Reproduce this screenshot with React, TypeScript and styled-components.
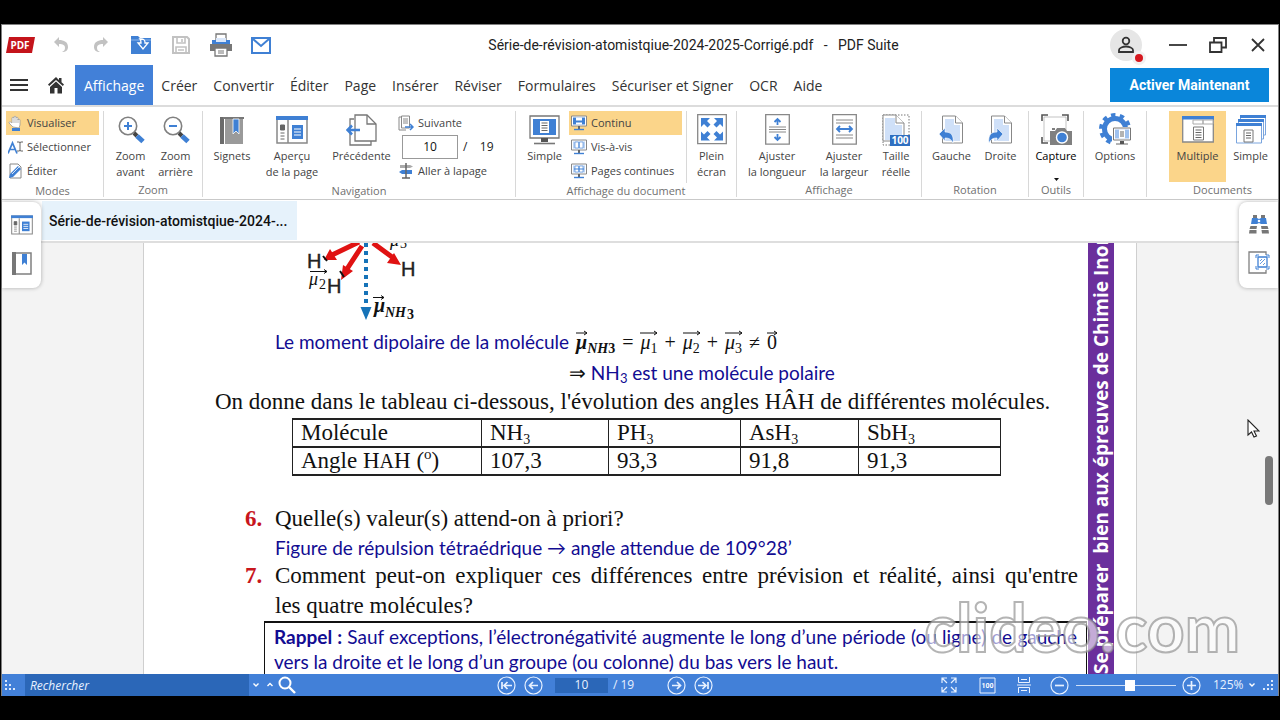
import React from "react";
import styled, { createGlobalStyle, css } from "styled-components";

const BLUE = "#4280d8";
const ICON = "#3f80d4";
const GREY = "#777";
const PALE = "#cfe0f8";
const INK = "#120c92";

const Global = createGlobalStyle`
  * { box-sizing: border-box; }
  body { margin: 0; background: #000; }
  button, input, select { font: inherit; color: inherit; }
  button { background: none; border: 0; padding: 0; cursor: pointer; }
  svg { display: block; flex: none; }
`;

const Screen = styled.div`
  height: 100vh;
  padding: 24px 1px;
  background: #000;
  display: flex;
  flex-direction: column;
  font-family: "Open Sans", "Noto Sans", sans-serif;
`;

const Window = styled.div`
  position: relative;
  flex: 1;
  min-height: 0;
  display: flex;
  flex-direction: column;
  background: #fff;
  border: 1px solid #808080;
  border-bottom: 0;
`;

/* ---------- title bar ---------- */

const TitleBar = styled.header`
  height: 40px;
  flex: none;
  display: flex;
  align-items: center;
  padding: 0 0 0 4px;
`;

const QuickTools = styled.div`
  display: flex;
  align-items: center;
`;

const QuickButton = styled.button`
  width: 40px;
  height: 32px;
  display: flex;
  align-items: center;
  justify-content: center;
`;

const Logo = styled.div`
  width: 35px;
`;

const Title = styled.h1`
  flex: 1;
  margin: 0;
  padding-right: 4px;
  text-align: center;
  white-space: pre;
  font: 400 14px/20px Roboto, sans-serif;
  color: #222;
`;

const Account = styled.button`
  position: relative;
  width: 32px;
  height: 32px;
  margin-right: 16px;
  border-radius: 50%;
  background: #e6e6e6;
  display: flex;
  align-items: center;
  justify-content: center;
`;

const AccountDot = styled.span`
  position: absolute;
  right: -4px;
  bottom: -4px;
  width: 14px;
  height: 14px;
  border-radius: 50%;
  background: #d6181f;
  border: 3px solid #f1f1f1;
`;

/* ---------- menu ---------- */

const MenuBar = styled.nav`
  height: 42px;
  flex: none;
  display: flex;
  align-items: stretch;
  padding-right: 9px;
  border-bottom: 2px solid #dcdcdc;
`;

const MenuIcon = styled.button<{ $w: number }>`
  width: ${(p) => p.$w}px;
  display: flex;
  align-items: center;
  justify-content: center;
`;

const MenuTab = styled.button<{ $active?: boolean }>`
  padding: 2px ${(p) => (p.$active ? 9 : 8)}px 0;
  font-size: 14px;
  line-height: 20px;
  white-space: nowrap;
  color: ${(p) => (p.$active ? "#fff" : "#333")};
  background: ${(p) => (p.$active ? BLUE : "transparent")};
`;

const Activate = styled.button`
  align-self: center;
  margin-left: auto;
  width: 159px;
  height: 34px;
  background: #0a86da;
  color: #fff;
  font: 700 14px/20px Roboto, sans-serif;
`;

/* ---------- ribbon ---------- */

const Ribbon = styled.div`
  height: 93px;
  flex: none;
  display: flex;
  padding: 4px 0 2px;
  border-bottom: 1px solid #c9c9c9;
  font-size: 11px;
  line-height: 16px;
  color: #444;
  overflow: hidden;
`;

const Group = styled.section<{ $w: number; $last?: boolean }>`
  width: ${(p) => p.$w}px;
  flex: none;
  display: flex;
  flex-direction: column;
  border-right: ${(p) => (p.$last ? 0 : 1)}px solid #d8d8d8;
  ${(p) =>
    p.$last &&
    css`
      margin-left: 22px;
    `}
`;

const GroupBody = styled.div<{ $pad?: number }>`
  height: 72px;
  display: flex;
  padding-left: ${(p) => p.$pad ?? 4}px;
`;

const GroupLabel = styled.div`
  text-align: center;
  font-size: 11px;
  line-height: 15px;
  color: #707070;
  white-space: nowrap;
`;

const Big = styled.button<{ $w: number; $active?: boolean; $dark?: boolean }>`
  width: ${(p) => p.$w}px;
  flex: none;
  display: flex;
  flex-direction: column;
  align-items: center;
  justify-content: flex-start;
  white-space: nowrap;
  background: ${(p) => (p.$active ? "#fbd58a" : "transparent")};
  color: ${(p) => (p.$dark ? "#000" : "inherit")};
`;

const BigIcon = styled.span`
  height: 37px;
  display: flex;
  align-items: center;
`;

const Column = styled.div<{ $w: number }>`
  width: ${(p) => p.$w}px;
  flex: none;
  display: flex;
  flex-direction: column;
`;

const Small = styled.button<{ $active?: boolean }>`
  height: 24px;
  display: flex;
  align-items: center;
  gap: 4px;
  padding-left: 2px;
  white-space: nowrap;
  background: ${(p) => (p.$active ? "#fbd58a" : "transparent")};
`;

const PageJump = styled.label`
  height: 26px;
  display: flex;
  align-items: center;
  padding-left: 6px;
  gap: 5px;
  font-size: 12px;
  color: #222;
  white-space: pre;
`;

const PageBox = styled.input`
  width: 56px;
  height: 24px;
  border: 1px solid #999;
  background: #fff;
  text-align: center;
  color: #111;
`;

const Divider = styled.div`
  width: 1px;
  margin-left: 4px;
  background: #d8d8d8;
`;

/* ---------- document tabs and side panels ---------- */

const TabStrip = styled.div`
  height: 43px;
  flex: none;
  display: flex;
  padding: 1px 0 1px 40px;
  border-bottom: 2px solid #dedede;
`;

const DocTab = styled.button`
  width: 255px;
  padding: 0 7px;
  background: #e6f2fb;
  color: #111;
  text-align: left;
  white-space: nowrap;
  font: 500 14px/38px Roboto, sans-serif;
`;

const SidePanel = styled.aside<{ $side: "left" | "right" }>`
  position: absolute;
  z-index: 2;
  top: 177px;
  ${(p) => p.$side}: 0;
  width: 39px;
  height: 86px;
  display: flex;
  flex-direction: column;
  align-items: center;
  justify-content: space-around;
  padding: 4px 0;
  background: #fff;
  border-radius: ${(p) => (p.$side === "left" ? "0 8px 8px 0" : "8px 0 0 8px")};
  box-shadow: 0 0 4px rgba(0, 0, 0, 0.3);
`;

/* ---------- document ---------- */

const Viewer = styled.main`
  position: relative;
  flex: 1;
  min-height: 0;
  overflow: hidden;
  display: flex;
  justify-content: center;
  background: #f3f3f3;
`;

const Sheet = styled.article`
  width: 994px;
  display: flex;
  background: #fff;
  border: 1px solid #cfcfcf;
  border-width: 0 1px;
`;

const Content = styled.div`
  flex: 1;
  min-width: 0;
  color: #111;
`;

const Band = styled.div`
  width: 26px;
  margin-right: 22px;
  flex: none;
  overflow: hidden;
  background: #6b2f9c;
  color: #fff;
  display: flex;
  justify-content: center;
`;

const BandText = styled.div`
  writing-mode: vertical-rl;
  transform: rotate(180deg);
  white-space: pre;
  font: 700 19px/26px "Open Sans", sans-serif;
`;

const Figure = styled.svg`
  margin-left: 156px;
`;

const Blue = styled.p<{ $indent: number; $h: number }>`
  margin: 0;
  padding-left: ${(p) => p.$indent}px;
  color: ${INK};
  font-family: Lato, "Open Sans", sans-serif;
  font-size: 19px;
  line-height: ${(p) => p.$h}px;
  white-space: nowrap;
`;

const Sub = styled.sub`
  font-size: 14px;
  line-height: 0;
  vertical-align: -4px;
`;

const BlueSub = styled(Sub)`
  font-size: 13px;
  vertical-align: -3px;
`;

const Sup = styled.sup`
  font-size: 15px;
  line-height: 0;
  vertical-align: 9px;
`;

const Math = styled.span`
  color: #111;
  font-family: "Liberation Serif", serif;
  font-size: 20px;
`;

const Equation = styled(Math)`
  display: inline-flex;
  gap: 7px;
  margin-left: 2px;
`;

const VecBox = styled.span<{ $bold?: boolean }>`
  position: relative;
  display: inline-block;
  font-weight: ${(p) => (p.$bold ? 700 : 400)};
`;

const VecArrow = styled.svg`
  position: absolute;
  left: 0;
  top: 5px;
`;

const Serif = styled.p<{ $indent?: number }>`
  margin: 0;
  padding-left: ${(p) => p.$indent ?? 0}px;
  font-family: "Liberation Serif", serif;
  font-size: 23px;
  line-height: 30px;
  white-space: nowrap;
`;

const Data = styled.table`
  width: 708px;
  margin: 1px 0 28px 148px;
  border-collapse: collapse;
  table-layout: fixed;
  font-family: "Liberation Serif", serif;
  font-size: 23px;
  line-height: 26px;
  th, td {
    height: 28px;
    padding: 0 8px;
    border: 2px solid #222;
    border-width: 2px 1px;
    font-weight: 400;
    text-align: left;
    white-space: nowrap;
  }
`;

const SmallCap = styled.span`
  font-size: 20px;
`;

const Questions = styled.ol`
  list-style: none;
  margin: 0;
  padding: 0 10px 0 101px;
`;

const Question = styled.li`
  display: grid;
  grid-template-columns: 30px 1fr;
  font-family: "Liberation Serif", serif;
  font-size: 23px;
  line-height: 30px;
`;

const Num = styled.b`
  color: #c8161d;
`;

const Ask = styled.div`
  text-align: justify;
`;

const Recall = styled.div`
  margin: 0 1px 0 120px;
  padding: 1px 9px 0 9px;
  height: 80px;
  border: 1px solid #111;
  border-top-width: 2px;
  color: ${INK};
  font-family: Lato, "Open Sans", sans-serif;
  font-size: 19px;
  line-height: 25px;
  text-align: justify;
`;

const ScrollThumb = styled.div`
  position: absolute;
  right: 5px;
  top: 213px;
  width: 8px;
  height: 49px;
  border-radius: 4px;
  background: #787878;
`;

const Cursor = styled.svg`
  position: absolute;
  right: 18px;
  top: 176px;
`;

const Watermark = styled.div`
  position: absolute;
  z-index: 3;
  right: 38px;
  bottom: 29px;
  font: 700 66px/80px Lato, sans-serif;
  color: rgba(255, 255, 255, 0.6);
  -webkit-text-stroke: 2px rgba(140, 140, 140, 0.65);
  pointer-events: none;
`;

/* ---------- status bar ---------- */

const Status = styled.footer`
  height: 22px;
  flex: none;
  display: grid;
  grid-template-columns: 7fr auto 8fr;
  align-items: center;
  background: ${BLUE};
  color: #e8f1ff;
  font-size: 12px;
  line-height: 16px;
`;

const StatusPart = styled.div<{ $end?: boolean }>`
  display: flex;
  align-items: center;
  justify-content: ${(p) => (p.$end ? "flex-end" : "flex-start")};
`;

const Search = styled.input`
  width: 224px;
  height: 22px;
  margin-left: 5px;
  padding: 0 5px;
  border: 0;
  background: #2b67b8;
  color: #fff;
  font-style: italic;
  font-size: 12px;
  &::placeholder { color: #e8f1ff; opacity: 1; }
`;

const StatusButton = styled.button<{ $w: number }>`
  width: ${(p) => p.$w}px;
  height: 22px;
  display: flex;
  align-items: center;
  justify-content: center;
`;

const StatusPage = styled.label`
  display: flex;
  align-items: center;
  gap: 5px;
  width: 108px;
  margin-left: 8px;
`;

const StatusPageBox = styled.input`
  width: 53px;
  height: 15px;
  border: 0;
  padding: 0;
  background: #2b67b8;
  text-align: center;
`;

const Slider = styled.input`
  appearance: none;
  width: 100px;
  height: 20px;
  margin: 0;
  background: linear-gradient(#cfe0f8, #cfe0f8) center / 100% 1px no-repeat;
  &::-webkit-slider-thumb {
    appearance: none;
    width: 10px;
    height: 11px;
    background: #fff;
  }
`;

const Zoom = styled.select`
  appearance: none;
  border: 0;
  padding: 0;
  margin-left: 7px;
  width: 33px;
  background: transparent;
`;

/* ---------- icons ---------- */

const Pdf = () => (
  <svg width="30" height="18" viewBox="0 0 30 18">
    <path d="M3 1h26l-3 16H0z" fill="#c4141b" />
    <text x="14" y="13" textAnchor="middle" fontFamily="Open Sans, sans-serif" fontWeight="700" fontSize="10" fill="#fff">PDF</text>
  </svg>
);

const Undo = ({ flip }: { flip?: boolean }) => (
  <svg width="16" height="18" viewBox="0 0 16 18">
    <path transform={flip ? "matrix(-1 0 0 1 16 0)" : undefined} d="M6 1 1 6l5 5V8c4 0 6 1 6 4 0 2-1 3-3 4 4 0 6-2 6-5 0-5-4-7-9-7z" fill="#c2c2c2" />
  </svg>
);

const Folder = () => (
  <svg width="22" height="20" viewBox="0 0 22 20">
    <path d="M1 1h7l2 2h11v16H1z" fill={ICON} />
    <path d="M1 5h20" stroke="#8db6ec" />
    <path d="M11 4c4 0 4 2 4 4h3l-5 6-5-6h3c0-2 0-3-1-4z" fill={ICON} stroke="#fff" strokeWidth="1.3" />
  </svg>
);

const Save = () => (
  <svg width="18" height="18" viewBox="0 0 18 18" fill="none" stroke="#c2c2c2" strokeWidth="2">
    <path d="M1 1h14l2 2v14H1z" />
    <path d="M5 1v6h8V1M10 3v3M4 17v-6h10v6M6 14h6" strokeWidth="1.6" />
  </svg>
);

const Printer = () => (
  <svg width="22" height="24" viewBox="0 0 22 24">
    <path d="M6 1h10v6H6z" fill="#fff" stroke={GREY} strokeWidth="1.3" />
    <path d="M0 11h22v7H0z" fill="#777" />
    <path d="M2 7h18v4H2z" fill={ICON} />
    <path d="M6 5h10v4H6z" fill="#dbe8fb" />
    <path d="M5 15h12v8H5z" fill="#fff" stroke={GREY} strokeWidth="1.3" />
    <path d="M8 18h6M8 20h6" stroke={GREY} />
  </svg>
);

const Mail = () => (
  <svg width="20" height="17" viewBox="0 0 20 17" fill="none" stroke={ICON} strokeWidth="2">
    <path d="M1 1h18v15H1zM2 2l8 7 8-7" />
  </svg>
);

const Home = () => (
  <svg width="16" height="17" viewBox="0 0 16 17" fill="#333">
    <path d="M8 0 0 7.500 1.200 9 8 3l6.800 6L16 7.500l-2.500-2.300V1H11v2z" />
    <path d="M8 4.500 2 10v6.500h4.500V11h3v5.500H14V10z" />
  </svg>
);

const Person = () => (
  <svg width="18" height="18" viewBox="0 0 18 18" fill="none" stroke="#333" strokeWidth="1.8">
    <circle cx="9" cy="5" r="3.300" />
    <path d="M2 16v-2c0-2 4-3.500 7-3.500s7 1.500 7 3.500v2z" />
  </svg>
);

const Hand = () => (
  <svg width="15" height="17" viewBox="0 0 15 17">
    <path d="M5 12 1 8c0-2 2-1 3 0V3c0-1 2-1 2 0V2c0-1 2-1 2 0v1c0-1 2-1 2 0v2c0-1 2-1 2 0v5l-1 3z" fill="#fff" stroke="#999" strokeWidth=".8" />
    <path d="M6 3v5M8 3v5M10 4v4" stroke="#999" strokeWidth=".7" />
    <path d="M4 13h8v3H4z" fill={ICON} />
  </svg>
);

const Select = () => (
  <svg width="15" height="15" viewBox="0 0 15 15" fill="none">
    <path d="M0 13.500 4.500 3 9 13.500M2 9.500h5" stroke={ICON} strokeWidth="1.7" />
    <path d="M9 2h2l1 .5 1-.5h2M12 2v9M9 11h2l1-.5 1 .5h2" stroke="#666" />
  </svg>
);

const Edit = () => (
  <svg width="15" height="16" viewBox="0 0 15 16">
    <path d="M2 1h8l3 3v11H2z" fill="#fff" stroke="#888" />
    <path d="m2 11 8-8 3 3-8 8-4 1z" fill={ICON} />
    <path d="m4 11 7-7" stroke="#fff" strokeWidth=".8" />
  </svg>
);

const Lens = ({ plus }: { plus?: boolean }) => (
  <svg width="28" height="28" viewBox="0 0 28 28">
    <circle cx="11" cy="10" r="8.700" fill="#fff" stroke="#808080" strokeWidth="1.600" />
    <path d={plus ? "M11 6v8M7 10h8" : "M7 10h8"} stroke={ICON} strokeWidth="2" />
    <path d="m17 17 3 3" stroke="#444" strokeWidth="4" />
    <path d="m20 20 6 5.500" stroke={ICON} strokeWidth="5" />
  </svg>
);

const Book = () => (
  <svg width="24" height="28" viewBox="0 0 24 28">
    <path d="M0 1h4v27H0z" fill="#6b6b6b" />
    <path d="M5 1h18v27H5z" fill="#9a9a9a" />
    <path d="M3 1h21v2H3z" fill="#777" />
    <path d="M13 3h6v15l-3-3-3 3z" fill={ICON} stroke="#fff" strokeWidth=".8" />
  </svg>
);

const Preview = ({ small }: { small?: boolean }) => (
  <svg width={small ? 22 : 32} height={small ? 20 : 28} viewBox="0 0 32 28">
    <path d="M1 1h30v26H1z" fill="#fff" stroke="#888" strokeWidth="1.500" />
    <path d="M0 0h32v4H0z" fill={ICON} />
    <path d="M12 4v23" stroke="#888" strokeWidth="1.500" />
    <path d="M4.500 9h4v5h-4zM4.500 17h4M4.500 20h4M4.500 23h4" fill="#666" stroke="#666" />
    <path d="M16 9h11v14H16z" fill={ICON} />
    <path d="M18 13h7M18 16h7M18 19h7" stroke="#fff" strokeWidth="1.200" />
  </svg>
);

const PrevPage = () => (
  <svg width="31" height="32" viewBox="0 0 31 32" fill="none" stroke={GREY} strokeWidth="1.300">
    <path d="M8 5H4v26h21v-4" fill="#fff" />
    <path d="M9 1h12l9 9v17H9z" fill="#fff" />
    <path d="M21 1v9h9" />
    <path d="M14 16H2M6 11.500 1.500 16 6 20.500" stroke={ICON} strokeWidth="2.600" />
  </svg>
);

const NextPage = () => (
  <svg width="16" height="16" viewBox="0 0 16 16" fill="none" stroke="#888">
    <path d="M3 2H1v13h7M3.500 1h8v12h-8z" fill="#fff" />
    <path d="M5 4h5M5 6h5M5 8h5" />
    <path d="M7 12h7M12 9l3 3-3 3" stroke={ICON} strokeWidth="1.500" />
  </svg>
);

const GoTo = () => (
  <svg width="16" height="16" viewBox="0 0 16 16">
    <path d="M2 2h10l3 1.500L12 5H2z" fill="#aaa" />
    <path d="M4 7h10v4H4L1 9z" fill={ICON} />
    <path d="M8 0v15M4 15h8" stroke="#666" strokeWidth="1.500" />
  </svg>
);

const Monitor = () => (
  <svg width="31" height="31" viewBox="0 0 31 31">
    <path d="M1 2h29v22H1z" fill="#fff" stroke={GREY} strokeWidth="1.300" />
    <path d="M4 5h23v16H4z" fill={ICON} />
    <path d="M11 7h9v12h-9z" fill="#fff" />
    <path d="M12.500 9h6M12.500 11.500h6M12.500 14h6M12.500 16.500h6" stroke="#666" strokeWidth="1.200" />
    <path d="M12 24h7v4h-7z" fill="#555" />
    <path d="M5 29.500h21" stroke="#777" strokeWidth="1.600" />
  </svg>
);

const MiniMonitor = ({ kind }: { kind: "one" | "two" | "four" }) => (
  <svg width="16" height="16" viewBox="0 0 16 16">
    <path d="M.5 1h15v10H.5z" fill="#fff" stroke="#888" />
    <path d="M2 2.500h12v7H2z" fill={kind === "one" ? ICON : "#bcd5f5"} />
    {kind === "one" && <path d="M5 2.500h6v3H5zM5 7.500h6v2H5z" fill="#fff" />}
    {kind !== "one" && <path d="M4 3h3.500v6H4zM8.500 3H12v6H8.500z" fill="#fff" stroke={ICON} strokeWidth=".6" />}
    {kind === "four" && <path d="M3 6h10" stroke={ICON} />}
    <path d="M7 11h2v3H7z" fill="#666" />
    <path d="M3 14.500h10" stroke={ICON} strokeWidth="1.400" />
  </svg>
);

const FullScreen = () => (
  <svg width="30" height="31" viewBox="0 0 30 31">
    <path d="M.7.7h28.600v29H.7z" fill="#fff" stroke="#888" strokeWidth="1.300" />
    {["", "matrix(-1 0 0 1 30 0)", "matrix(1 0 0 -1 0 30.400)", "matrix(-1 0 0 -1 30 30.400)"].map((t) => (
      <path key={t} transform={t || undefined} d="M4 4h9l-3 3 3.500 3.500-3 3L7 10l-3 3z" fill={ICON} />
    ))}
  </svg>
);

const Fit = ({ wide }: { wide?: boolean }) => (
  <svg width="25" height="31" viewBox="0 0 25 31" fill="none">
    <path d="M.7.7h23.600v29.500H.7z" fill="#fff" stroke="#888" strokeWidth="1.300" />
    {wide ? (
      <>
        <path d="M4 6h17M4 9h17M4 21h17M4 24h17" stroke="#888" />
        <path d="M5 15h15M8 12l-3 3 3 3M17 12l3 3-3 3" stroke={ICON} strokeWidth="1.800" />
      </>
    ) : (
      <>
        <path d="M4 13h17M4 15.500h17M4 18h17" stroke="#888" />
        <path d="M12.500 11V5M9.500 8l3-3 3 3M12.500 20v6M9.500 23l3 3 3-3" stroke={ICON} strokeWidth="1.800" />
      </>
    )}
  </svg>
);

const RealSize = () => (
  <svg width="28" height="32" viewBox="0 0 28 32">
    <path d="M1 1h26v30H1z" fill="none" stroke="#777" strokeDasharray="1.500 1.500" />
    <path d="M1 1h13l8 8v18H1z" fill="#fff" stroke="#888" />
    <path d="M3 4h10v7h7v15H3z" fill={PALE} />
    <path d="M14 1v8h8" fill="#fff" stroke="#888" />
    <path d="M8 21h20v11H8z" fill="#2f6fc0" />
    <text x="18" y="30" textAnchor="middle" fontFamily="Open Sans, sans-serif" fontWeight="700" fontSize="10" fill="#fff">100</text>
  </svg>
);

const Rotate = ({ right }: { right?: boolean }) => (
  <svg width="25" height="30" viewBox="0 0 25 30">
    <path d="M3.500 1h13l7 7v20h-20z" fill="#fff" stroke="#888" />
    <path d="M6 4h9v6h6v16H6z" fill={PALE} />
    <path d="M16.500 1v7h7" fill="#fff" stroke="#888" />
    <path transform={right ? "matrix(-1 0 0 1 15 0)" : undefined} d="m0 19 6-6v4c6 0 9 3 8 11-2-4-4-5-8-5v3z" fill={ICON} stroke="#fff" strokeWidth=".6" />
  </svg>
);

const Camera = () => (
  <svg width="31" height="32" viewBox="0 0 31 32">
    <path d="M1 7V1h6M21 1h6v6M1 23v6h6" fill="none" stroke="#555" strokeWidth="1.600" />
    <path d="M3 3h22v24H3z" fill="none" stroke="#aaa" strokeWidth=".7" />
    <path d="M9 17h5l2-3h8l2 3h5v14H9z" fill="#808080" />
    <path d="M11 15h3" stroke="#555" strokeWidth="1.500" />
    <circle cx="21" cy="23.500" r="5.500" fill={ICON} stroke="#fff" strokeWidth="1.400" />
  </svg>
);

const Gear = () => (
  <svg width="32" height="33" viewBox="0 0 32 33">
    <circle cx="16" cy="16" r="10.500" fill="none" stroke={ICON} strokeWidth="5" />
    <circle cx="16" cy="16" r="14" fill="none" stroke={ICON} strokeWidth="4" strokeDasharray="4.400 4.396" />
    <path d="M13 14h19v19H13z" fill="#fff" />
    <path d="M14.500 15h17v12h-17z" fill="#fff" stroke="#777" />
    <path d="M16 16.500h14v9H16z" fill="#9ec1ef" />
    <path d="M20 16.500h6v9h-6z" fill="#fff" />
    <path d="M21 19h4M21 21h4M21 23h4M17 31h12" stroke="#666" />
    <path d="M21 28h4v3h-4z" fill="#555" />
  </svg>
);

const Multi = () => (
  <svg width="32" height="28" viewBox="0 0 32 28">
    <path d="M.7 1h30.600v25H.7z" fill="#fff" stroke="#888" strokeWidth="1.300" />
    <path d="M0 0h32v3.500H0z" fill={ICON} />
    <path d="M11 4h10v4H11zM21 4h10v4H21z" fill="#fff" stroke="#aaa" />
    <path d="M11.500 11h10v13h-10z" fill="#fff" stroke="#777" />
    <path d="M13.500 14h6M13.500 16.500h6M13.500 19h6M13.500 21.500h6" stroke="#666" />
  </svg>
);

const Stack = () => (
  <svg width="31" height="30" viewBox="0 0 31 30">
    {[0, 1, 2].map((i) => (
      <g key={i}>
        <path d={`M${5 - i * 2 + 0.500} ${1 + i * 4}h25v19h-25z`} fill="#fff" stroke="#7aa5de" />
        <path d={`M${5 - i * 2} ${i * 4}h26v3h-26z`} fill={ICON} />
      </g>
    ))}
    <path d="M9 15h9v12H9z" fill="#fff" stroke="#777" />
    <path d="M11 18h5M11 20.500h5M11 23h5" stroke="#666" />
  </svg>
);

const BookSmall = () => (
  <svg width="20" height="23" viewBox="0 0 20 23">
    <path d="M1 1h18v21H1z" fill="#fff" stroke="#808080" strokeWidth="1.500" />
    <path d="M0 0h4v23H0z" fill="#777" />
    <path d="M10 2h5v11l-2.500-2.500L10 13z" fill={ICON} />
  </svg>
);

const Binoculars = () => (
  <svg width="20" height="19" viewBox="0 0 20 19">
    <path d="M4 0h4v3H4zM12 0h4v3h-4z" fill="#777" />
    <path d="M3 3h5l2 1 2-1h5l1 6h-6l-2-1-2 1H2z" fill={ICON} />
    <circle cx="10" cy="6" r="1.300" fill="#fff" />
    <path d="M1.500 11H8l-.5 3h-7zM12 11h6.500l1 3h-7zM.5 15h7v3.500H0zM12.500 15h7l.5 3.500h-7z" fill="#777" />
  </svg>
);

const Snapshot = () => (
  <svg width="22" height="24" viewBox="0 0 22 24" fill="none">
    <path d="M18 4V1H1v21h17v-3" stroke="#808080" strokeWidth="1.300" />
    <path d="M10 6h9v10h-9z" stroke={ICON} strokeWidth="1.300" />
    <path d="M8 7V4h3M18 4h3v3M8 15v3h3M18 18h3v-3" stroke={ICON} />
    <path d="m12 13 5-5M12 10l2-2M15 14l2-2" stroke={ICON} strokeWidth=".8" />
  </svg>
);

const Dots = () => (
  <svg width="12" height="12" viewBox="0 0 12 12" fill="#dce9fc">
    <path d="M0 1h2v2H0zM0 5h2v2H0zM4 5h2v2H4zM0 9h2v2H0zM4 9h2v2H4zM8 9h2v2H8z" />
  </svg>
);

const Chevron = ({ up }: { up?: boolean }) => (
  <svg width="8" height="6" viewBox="0 0 8 6" fill="none" stroke="#fff" strokeWidth="1.400">
    <path d={up ? "m1.500 4 2.500-2.500L6.500 4" : "m1.500 1.500L4 4l2.500-2.500"} />
  </svg>
);

const Magnifier = () => (
  <svg width="18" height="18" viewBox="0 0 18 18" fill="none" stroke="#fff" strokeWidth="2">
    <circle cx="7" cy="7" r="5.500" />
    <path d="m11 11 6 6" strokeWidth="2.400" />
  </svg>
);

const Ring = ({ d }: { d: string }) => (
  <svg width="19" height="19" viewBox="0 0 19 19" fill="none" stroke="#e8f1ff">
    <circle cx="9.500" cy="9.500" r="8.500" strokeWidth="1.200" />
    <path d={d} strokeWidth="1.700" />
  </svg>
);

const Arrow = ({ w }: { w: number }) => (
  <VecArrow width={w} height="6" viewBox={`0 0 ${w} 6`} fill="none" stroke="#111">
    <path d={`M0 3h${w - 1}M${w - 4} 1l3 2-3 2`} />
  </VecArrow>
);

const Vec = ({ w, bold, sub }: { w: number; bold?: boolean; sub?: string }) => (
  <VecBox $bold={bold}>
    <i>μ</i>
    {sub && <Sub>{sub}</Sub>}
    <Arrow w={w} />
  </VecBox>
);

const Moments = () => (
  <Figure width="120" height="82" viewBox="300 243 120 82" role="img" aria-label="Moments dipolaires de NH3">
    <g stroke="#e01212" strokeWidth="5">
      <path d="M359 242 332 255M362 246l-15 23M373 243l19 14" />
    </g>
    <g fill="#e01212">
      <path d="m324 260 6-11 7 11zM341 280l2-15 10 6zM401 265l-14-2 7-10z" />
    </g>
    <path d="M323 256l4 5M340 271l4 6" stroke="#111" strokeWidth="2" />
    <path d="M366 243v63" stroke="#1673b8" strokeWidth="4" strokeDasharray="4 4" />
    <path d="M360.500 307h11L366 320z" fill="#1673b8" />
    <g fontFamily="Liberation Sans, sans-serif" fontSize="20" fill="#222" stroke="#222" strokeWidth=".4">
      <text x="307" y="268">H</text>
      <text x="327" y="293">H</text>
      <text x="401" y="276">H</text>
    </g>
    <g fontFamily="Liberation Serif, serif" fontStyle="italic" fontSize="18" fill="#111">
      <text x="309" y="285">μ</text>
      <text x="319" y="289" fontSize="14" fontStyle="normal">2</text>
      <text x="390" y="246">μ</text>
      <text x="400" y="248" fontSize="14" fontStyle="normal">3</text>
      <g fontWeight="700">
        <text x="374" y="312" fontSize="20">μ</text>
        <text x="385" y="317" fontSize="14">NH</text>
        <text x="407" y="319" fontSize="14" fontStyle="normal">3</text>
      </g>
    </g>
    <path d="M310 271.500h17M324 269.500l3 2-3 2M373 297.500h11M381 295.500l3 2-3 2" fill="none" stroke="#111" />
  </Figure>
);

const menu = ["Affichage", "Créer", "Convertir", "Éditer", "Page", "Insérer", "Réviser", "Formulaires", "Sécuriser et Signer", "OCR", "Aide"];

type BigProps = { w: number; icon: React.ReactNode; lines: string[]; active?: boolean; dark?: boolean; children?: React.ReactNode };

const BigButton = ({ w, icon, lines, active, dark, children }: BigProps) => (
  <Big $w={w} $active={active} $dark={dark}>
    <BigIcon>{icon}</BigIcon>
    {lines.map((l) => (
      <span key={l}>{l}</span>
    ))}
    {children}
  </Big>
);

const columns = [189, 127, 132, 118, 142];

export default function App() {
  return (
    <Screen>
      <Global />
      <Window>
        <TitleBar>
          <Logo><Pdf /></Logo>
          <QuickTools>
            <QuickButton aria-label="Annuler"><Undo /></QuickButton>
            <QuickButton aria-label="Rétablir"><Undo flip /></QuickButton>
            <QuickButton aria-label="Ouvrir"><Folder /></QuickButton>
            <QuickButton aria-label="Enregistrer"><Save /></QuickButton>
            <QuickButton aria-label="Imprimer"><Printer /></QuickButton>
            <QuickButton aria-label="Envoyer"><Mail /></QuickButton>
          </QuickTools>
          <Title>{"Série-de-révision-atomistqiue-2024-2025-Corrigé.pdf   -   PDF Suite"}</Title>
          <Account aria-label="Compte"><Person /><AccountDot /></Account>
          <QuickButton aria-label="Réduire">
            <svg width="18" height="18" viewBox="0 0 18 18"><path d="M0 9h18" stroke="#333" strokeWidth="1.800" /></svg>
          </QuickButton>
          <QuickButton aria-label="Restaurer">
            <svg width="18" height="16" viewBox="0 0 18 16" fill="none" stroke="#333" strokeWidth="1.800">
              <path d="M1 5.500h11.500V15H1zM5 5V1h12v9.500h-4" />
            </svg>
          </QuickButton>
          <QuickButton aria-label="Fermer">
            <svg width="14" height="14" viewBox="0 0 14 14"><path d="m1 1 12 12M13 1 1 13" stroke="#333" strokeWidth="1.800" /></svg>
          </QuickButton>
        </TitleBar>

        <MenuBar>
          <MenuIcon $w={34} aria-label="Menu">
            <svg width="18" height="14" viewBox="0 0 18 14"><path d="M0 2h18M0 7h18M0 12h18" stroke="#333" strokeWidth="1.800" /></svg>
          </MenuIcon>
          <MenuIcon $w={39} aria-label="Accueil"><Home /></MenuIcon>
          {menu.map((m, i) => (
            <MenuTab key={m} $active={i === 0}>{m}</MenuTab>
          ))}
          <Activate>Activer Maintenant</Activate>
        </MenuBar>

        <Ribbon>
          <Group $w={102}>
            <GroupBody>
              <Column $w={93}>
                <Small $active><Hand />Visualiser</Small>
                <Small><Select />Sélectionner</Small>
                <Small><Edit />Éditer</Small>
              </Column>
            </GroupBody>
            <GroupLabel>Modes</GroupLabel>
          </Group>
          <Group $w={99}>
            <GroupBody>
              <BigButton w={45} icon={<Lens plus />} lines={["Zoom", "avant"]} />
              <BigButton w={45} icon={<Lens />} lines={["Zoom", "arrière"]} />
            </GroupBody>
            <GroupLabel>Zoom</GroupLabel>
          </Group>
          <Group $w={313}>
            <GroupBody>
              <BigButton w={50} icon={<Book />} lines={["Signets"]} />
              <BigButton w={70} icon={<Preview />} lines={["Aperçu", "de la page"]} />
              <BigButton w={69} icon={<PrevPage />} lines={["Précédente"]} />
              <Column $w={112}>
                <Small><NextPage />Suivante</Small>
                <PageJump>
                  <PageBox defaultValue="10" aria-label="Page" />
                  {"/    19"}
                </PageJump>
                <Small><GoTo />Aller à lapage</Small>
              </Column>
            </GroupBody>
            <GroupLabel>Navigation</GroupLabel>
          </Group>
          <Group $w={221}>
            <GroupBody>
              <BigButton w={49} icon={<Monitor />} lines={["Simple"]} />
              <Column $w={113}>
                <Small $active><MiniMonitor kind="one" />Continu</Small>
                <Small><MiniMonitor kind="two" />Vis-à-vis</Small>
                <Small><MiniMonitor kind="four" />Pages continues</Small>
              </Column>
              <Divider />
              <BigButton w={49} icon={<FullScreen />} lines={["Plein", "écran"]} />
            </GroupBody>
            <GroupLabel>Affichage du document</GroupLabel>
          </Group>
          <Group $w={185}>
            <GroupBody $pad={6}>
              <BigButton w={68} icon={<Fit />} lines={["Ajuster", "la longueur"]} />
              <BigButton w={66} icon={<Fit wide />} lines={["Ajuster", "la largeur"]} />
              <BigButton w={38} icon={<RealSize />} lines={["Taille", "réelle"]} />
            </GroupBody>
            <GroupLabel>Affichage</GroupLabel>
          </Group>
          <Group $w={107}>
            <GroupBody $pad={5}>
              <BigButton w={49} icon={<Rotate />} lines={["Gauche"]} />
              <BigButton w={49} icon={<Rotate right />} lines={["Droite"]} />
            </GroupBody>
            <GroupLabel>Rotation</GroupLabel>
          </Group>
          <Group $w={55}>
            <GroupBody>
              <BigButton w={46} icon={<Camera />} lines={["Capture"]} dark>
                <svg width="5" height="18" viewBox="0 0 5 18"><path d="M0 14h5l-2.500 3z" fill="#111" /></svg>
              </BigButton>
            </GroupBody>
            <GroupLabel>Outils</GroupLabel>
          </Group>
          <Group $w={63}>
            <GroupBody>
              <BigButton w={54} icon={<Gear />} lines={["Options"]} />
            </GroupBody>
          </Group>
          <Group $w={107} $last>
            <GroupBody $pad={0}>
              <BigButton w={57} icon={<Multi />} lines={["Multiple"]} active />
              <BigButton w={49} icon={<Stack />} lines={["Simple"]} />
            </GroupBody>
            <GroupLabel>Documents</GroupLabel>
          </Group>
        </Ribbon>

        <TabStrip>
          <DocTab>Série-de-révision-atomistqiue-2024-...</DocTab>
        </TabStrip>

        <SidePanel $side="left">
          <button aria-label="Miniatures"><Preview small /></button>
          <button aria-label="Signets"><BookSmall /></button>
        </SidePanel>
        <SidePanel $side="right">
          <button aria-label="Rechercher"><Binoculars /></button>
          <button aria-label="Instantané"><Snapshot /></button>
        </SidePanel>

        <Viewer>
          <Sheet>
            <Content>
              <Moments />
              <Blue $indent={131} $h={34}>
                Le moment dipolaire de la molécule{" "}
                <Equation>
                  <span><Vec w={12} bold /><b><Sub><i>NH</i>3</Sub></b></span>
                  <span>=</span>
                  <Vec w={18} sub="1" />
                  <span>+</span>
                  <Vec w={18} sub="2" />
                  <span>+</span>
                  <Vec w={18} sub="3" />
                  <span>≠</span>
                  <VecBox>0<Arrow w={11} /></VecBox>
                </Equation>
              </Blue>
              <Blue $indent={425} $h={27}>
                <Math>⇒</Math> NH<BlueSub>3</BlueSub> est une molécule polaire
              </Blue>
              <Serif $indent={71}>On donne dans le tableau ci-dessous, l'évolution des angles HÂH de différentes molécules.</Serif>
              <Data>
                <colgroup>
                  {columns.map((w) => <col key={w} width={w} />)}
                </colgroup>
                <tbody>
                  <tr>
                    <th scope="row">Molécule</th>
                    {["NH", "PH", "AsH", "SbH"].map((m) => <td key={m}>{m}<Sub>3</Sub></td>)}
                  </tr>
                  <tr>
                    <th scope="row">Angle H<SmallCap>A</SmallCap>H (<Sup>o</Sup>)</th>
                    {["107,3", "93,3", "91,8", "91,3"].map((v) => <td key={v}>{v}</td>)}
                  </tr>
                </tbody>
              </Data>
              <Questions>
                <Question><Num>6.</Num><Ask>Quelle(s) valeur(s) attend-on à priori?</Ask></Question>
              </Questions>
              <Blue $indent={131} $h={27}>Figure de répulsion tétraédrique → angle attendue de 109°28’</Blue>
              <Questions>
                <Question>
                  <Num>7.</Num>
                  <Ask>{"Comment peut-on expliquer ces différences entre prévision et réalité, ainsi qu'entre les\u00a0quatre molécules?"}</Ask>
                </Question>
              </Questions>
              <Recall>
                <b>Rappel :</b> Sauf exceptions, l’électronégativité augmente le long d’une période (ou ligne) de gauche
                vers la droite et le long d’un groupe (ou colonne) du bas vers le haut.
              </Recall>
            </Content>
            <Band><BandText>{"Se préparer  bien aux épreuves de Chimie Inorganique"}</BandText></Band>
          </Sheet>
          <ScrollThumb />
          <Cursor width="13" height="19" viewBox="0 0 13 19">
            <path d="M1 1v15l3.500-3 2.500 5 2.500-1-2.500-5h5z" fill="#fff" stroke="#222" strokeWidth="1.100" />
          </Cursor>
        </Viewer>

        <Watermark>clideo.com</Watermark>

        <Status>
          <StatusPart>
            <StatusButton $w={18} aria-label="Options"><Dots /></StatusButton>
            <Search placeholder="Rechercher" aria-label="Rechercher" />
            <StatusButton $w={14} aria-label="Suivant"><Chevron /></StatusButton>
            <StatusButton $w={14} aria-label="Précédent"><Chevron up /></StatusButton>
            <StatusButton $w={20} aria-label="Lancer la recherche"><Magnifier /></StatusButton>
          </StatusPart>
          <StatusPart>
            <StatusButton $w={27} aria-label="Première page"><Ring d="M5 6v7M15 9.500H7M10.500 6 7 9.500l3.500 3.500" /></StatusButton>
            <StatusButton $w={27} aria-label="Page précédente"><Ring d="M14 9.500H5.500M9 6 5.500 9.500 9 13" /></StatusButton>
            <StatusPage><StatusPageBox defaultValue="10" aria-label="Page courante" />/ 19</StatusPage>
            <StatusButton $w={27} aria-label="Page suivante"><Ring d="M5 9.500h8.500M10 6l3.500 3.500L10 13" /></StatusButton>
            <StatusButton $w={27} aria-label="Dernière page"><Ring d="M14 6v7M4 9.500h8M8.500 6l3.500 3.500L8.500 13" /></StatusButton>
          </StatusPart>
          <StatusPart $end>
            <StatusButton $w={38} aria-label="Plein écran">
              <svg width="16" height="16" viewBox="0 0 16 16" fill="none" stroke="#e8f1ff" strokeWidth="1.200">
                <path d="M1 6V1h5M1 1l5 5M10 1h5v5M15 1l-5 5M1 10v5h5M1 15l5-5M15 10v5h-5M15 15l-5-5" />
              </svg>
            </StatusButton>
            <StatusButton $w={38} aria-label="Taille réelle">
              <svg width="17" height="17" viewBox="0 0 17 17">
                <path d="M1 1h15v15H1z" fill="none" stroke="#e8f1ff" />
                <text x="8.500" y="11" textAnchor="middle" fontFamily="Roboto, sans-serif" fontWeight="700" fontSize="7" fill="#fff">100</text>
              </svg>
            </StatusButton>
            <StatusButton $w={36} aria-label="Défilement continu">
              <svg width="14" height="16" viewBox="0 0 14 16" fill="none" stroke="#e8f1ff">
                <path d="M1.500 0v5.500h11V0M4 2.500h6M0 8h14M1.500 16v-5.500h11V16M4 13.500h6" />
              </svg>
            </StatusButton>
            <StatusButton $w={34} aria-label="Zoom arrière"><Ring d="M5 9.500h9" /></StatusButton>
            <Slider type="range" min={0} max={100} defaultValue={54} aria-label="Zoom" />
            <StatusButton $w={30} aria-label="Zoom avant"><Ring d="M5 9.500h9M9.500 5v9" /></StatusButton>
            <Zoom aria-label="Niveau de zoom" defaultValue="125%"><option>125%</option><option>100%</option></Zoom>
            <StatusButton $w={12} aria-label="Choisir le zoom"><Chevron /></StatusButton>
            <StatusButton $w={20} aria-label="Redimensionner">
              <svg width="12" height="12" viewBox="0 0 12 12" fill="#dce9fc">
                <path d="M9 1h2v2H9zM5 5h2v2H5zM9 5h2v2H9zM1 9h2v2H1zM5 9h2v2H5zM9 9h2v2H9z" />
              </svg>
            </StatusButton>
          </StatusPart>
        </Status>
      </Window>
    </Screen>
  );
}
